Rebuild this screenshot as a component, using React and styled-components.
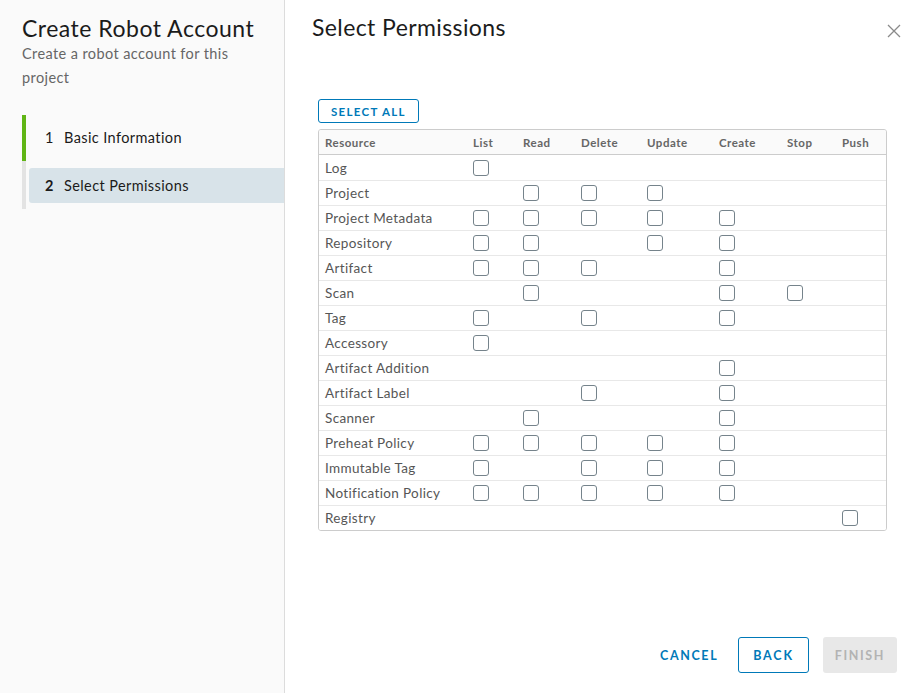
import React from "react";
import styled, { createGlobalStyle } from "styled-components";

const Global = createGlobalStyle`
  html, body { margin: 0; padding: 0; background: #fff; }
  body { font-family: Lato, "Open Sans", sans-serif; }
  * { box-sizing: border-box; }
`;

const Page = styled.div`
  width: 918px;
  height: 693px;
  display: flex;
  overflow: hidden;
`;

const Side = styled.aside`
  width: 285px;
  flex: none;
  background: #fafafa;
  border-right: 1px solid #dcdcdc;
  padding: 14px 0 0 22px;
  display: flex;
  flex-direction: column;
`;

const SideTitle = styled.h1`
  margin: 0;
  font-size: 23px;
  font-weight: 400;
  color: #1b1b1b;
  line-height: 28px;
  letter-spacing: 0.5px;
`;

const SideSub = styled.p`
  margin: 0;
  font-size: 14.5px;
  color: #666;
  line-height: 24px;
  width: 225px;
  letter-spacing: 0.4px;
`;

const Steps = styled.div`
  margin-top: 25px;
  display: flex;
  flex-direction: column;
`;

const Step = styled.div`
  display: flex;
  align-items: stretch;
  height: ${p => p.$h}px;
`;

const StepBar = styled.div`
  width: 4px;
  flex: none;
  background: ${p => (p.$done ? "#60b515" : "#e3e3e3")};
`;

const StepBody = styled.div`
  flex: 1;
  display: flex;
  align-items: center;
  padding-top: ${p => p.$pt || 0}px;
  padding-bottom: ${p => p.$pb || 0}px;
`;

const StepInner = styled.div`
  flex: 1;
  height: 35px;
  display: flex;
  align-items: center;
  margin-left: ${p => (p.$active ? 3 : 0)}px;
  padding-left: ${p => (p.$active ? 16 : 19)}px;
  background: ${p => (p.$active ? "#d8e3e9" : "transparent")};
  border-radius: 3px 0 0 3px;
  font-size: 14.5px;
  color: #1b1b1b;
  font-weight: 400;
  letter-spacing: 0.4px;
`;

const StepNum = styled.span`
  width: 19px;
  font-weight: ${p => (p.$active ? 700 : 400)};
`;

const Main = styled.main`
  flex: 1;
  display: flex;
  flex-direction: column;
  padding: 12px 0 0 27px;
  position: relative;
`;

const Title = styled.h2`
  margin: 0;
  font-size: 23px;
  font-weight: 400;
  color: #1b1b1b;
  line-height: 30px;
  letter-spacing: 0.4px;
`;

const Close = styled.button`
  position: absolute;
  top: 23px;
  right: 16px;
  width: 16px;
  height: 16px;
  padding: 0;
  border: 0;
  background: none;
  display: flex;
`;

const Content = styled.div`
  margin-top: 57px;
  margin-left: 6px;
  width: 569px;
  display: flex;
  flex-direction: column;
  gap: 6px;
`;

const OutlineBtn = styled.button`
  align-self: flex-start;
  height: ${p => p.$h || 24}px;
  padding: 0 ${p => p.$px || 12}px;
  border: 1px solid #0079b8;
  border-radius: 3px;
  background: #fff;
  color: #0079b8;
  font-family: inherit;
  font-size: ${p => p.$fs || 11.5}px;
  font-weight: 700;
  letter-spacing: ${p => p.$ls || 1.3}px;
  text-transform: uppercase;
`;

const Table = styled.div`
  border: 1px solid #ccc;
  border-radius: 3px;
  overflow: hidden;
`;

const Row = styled.div`
  display: grid;
  grid-template-columns: 148px 50px 58px 66px 72px 68px 55px 50px;
  height: 25px;
  align-items: center;
  border-top: ${p => (p.$first ? "0" : "1px solid #e8e8e8")};
  background: ${p => (p.$head ? "#fafafa" : "#fff")};
  ${p => (p.$head ? "border-bottom: 1px solid #ccc;" : "")}
`;

const HeadCell = styled.div`
  padding-left: 6px;
  font-size: 11.5px;
  font-weight: 700;
  color: #666;
  letter-spacing: 0.5px;
`;

const Cell = styled.div`
  padding-left: 6px;
  font-size: 13.5px;
  color: #565656;
  display: flex;
  align-items: center;
  letter-spacing: 0.35px;
`;

const Box = styled.span`
  width: 16px;
  height: 16px;
  border: 1px solid #75838b;
  border-radius: 3px;
  background: #fff;
  display: block;
`;

const Footer = styled.div`
  position: absolute;
  right: 21px;
  bottom: 20px;
  display: flex;
  align-items: center;
  gap: 14px;
`;

const FlatBtn = styled.button`
  height: 36px;
  padding: 0 ${p => p.$px || 12}px;
  border: 0;
  border-radius: 3px;
  background: ${p => (p.$disabled ? "#e8e8e8" : "transparent")};
  color: ${p => (p.$disabled ? "#b3b3b3" : "#0079b8")};
  font-family: inherit;
  font-size: 12.5px;
  font-weight: 700;
  letter-spacing: 1.6px;
  text-transform: uppercase;
`;

const cols = ["List", "Read", "Delete", "Update", "Create", "Stop", "Push"];
const rows = [
  ["Log", [1, 0, 0, 0, 0, 0, 0]],
  ["Project", [0, 1, 1, 1, 0, 0, 0]],
  ["Project Metadata", [1, 1, 1, 1, 1, 0, 0]],
  ["Repository", [1, 1, 0, 1, 1, 0, 0]],
  ["Artifact", [1, 1, 1, 0, 1, 0, 0]],
  ["Scan", [0, 1, 0, 0, 1, 1, 0]],
  ["Tag", [1, 0, 1, 0, 1, 0, 0]],
  ["Accessory", [1, 0, 0, 0, 0, 0, 0]],
  ["Artifact Addition", [0, 0, 0, 0, 1, 0, 0]],
  ["Artifact Label", [0, 0, 1, 0, 1, 0, 0]],
  ["Scanner", [0, 1, 0, 0, 1, 0, 0]],
  ["Preheat Policy", [1, 1, 1, 1, 1, 0, 0]],
  ["Immutable Tag", [1, 0, 1, 1, 1, 0, 0]],
  ["Notification Policy", [1, 1, 1, 1, 1, 0, 0]],
  ["Registry", [0, 0, 0, 0, 0, 0, 1]],
];

export default function App() {
  return (
    <Page>
      <Global />
      <Side>
        <SideTitle>Create Robot Account</SideTitle>
        <SideSub>Create a robot account for this project</SideSub>
        <Steps>
          <Step $h={46}>
            <StepBar $done />
            <StepBody $pb={1}>
              <StepInner>
                <StepNum>1</StepNum>Basic Information
              </StepInner>
            </StepBody>
          </Step>
          <Step $h={48}>
            <StepBar />
            <StepBody $pt={7} $pb={6}>
              <StepInner $active>
                <StepNum $active>2</StepNum>Select Permissions
              </StepInner>
            </StepBody>
          </Step>
        </Steps>
      </Side>
      <Main>
        <Title>Select Permissions</Title>
        <Close aria-label="close">
          <svg width="16" height="16" viewBox="0 0 16 16">
            <path d="M2 2 L14 14 M14 2 L2 14" stroke="#8a8a8a" strokeWidth="1.3" fill="none" />
          </svg>
        </Close>
        <Content>
          <OutlineBtn>Select All</OutlineBtn>
          <Table>
            <Row $head $first>
              <HeadCell>Resource</HeadCell>
              {cols.map(c => (
                <HeadCell key={c}>{c}</HeadCell>
              ))}
            </Row>
            {rows.map(([name, flags], i) => (
              <Row key={name} $first={i === 0}>
                <Cell>{name}</Cell>
                {flags.map((f, j) => (
                  <Cell key={j}>{f ? <Box /> : null}</Cell>
                ))}
              </Row>
            ))}
          </Table>
        </Content>
        <Footer>
          <FlatBtn $px={6}>Cancel</FlatBtn>
          <OutlineBtn $h={36} $px={14} $fs={12.5} $ls={1.8}>Back</OutlineBtn>
          <FlatBtn $disabled $px={12}>Finish</FlatBtn>
        </Footer>
      </Main>
    </Page>
  );
}
